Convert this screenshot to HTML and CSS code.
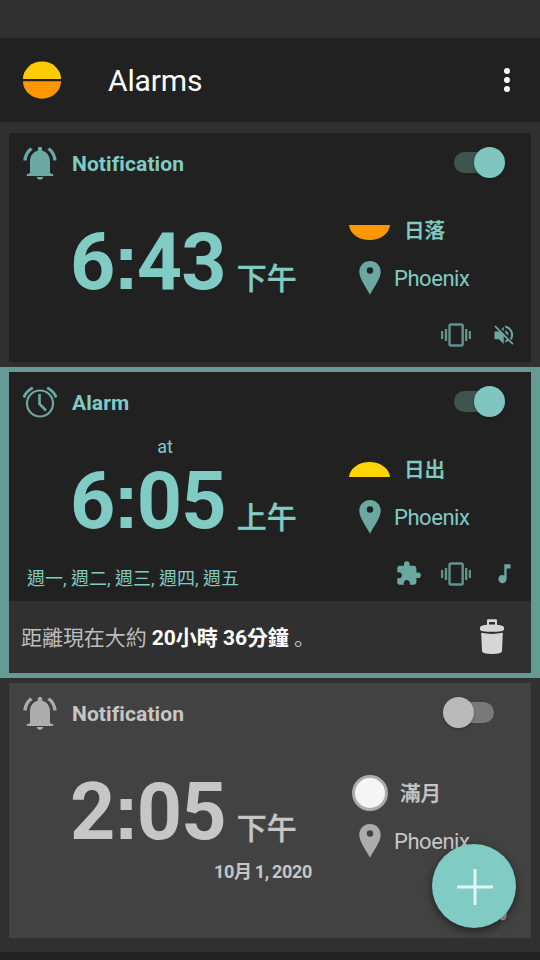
FILE: index.html
```html
<!DOCTYPE html>
<html lang="zh-Hant">
<head>
<meta charset="utf-8">
<title>Alarms</title>
<link rel="stylesheet" href="styles.css">
</head>
<body>
<svg class="defs" aria-hidden="true">
  <symbol id="bell" viewBox="0 0 24 24"><path d="M7.58 4.08L6.15 2.65C3.75 4.48 2.17 7.3 2.03 10.5h2c.15-2.65 1.51-4.97 3.55-6.42zM19.97 10.5h2c-.15-3.2-1.73-6.02-4.12-7.85l-1.42 1.43c2.02 1.45 3.39 3.77 3.54 6.42zM18 11c0-3.07-1.64-5.64-4.7-6.4V3.4C13.3 2.7 12.7 2.2 12 2.2s-1.3.5-1.3 1.2v1.2C7.6 5.36 6 7.92 6 11v7l-2 .9v.9h16v-.9l-2-.9zM10 20.4h4c-.2 1-1 1.7-2 1.7s-1.8-.7-2-1.7z"/></symbol>
  <symbol id="clock" viewBox="0 0 40 40"><g fill="none" stroke="currentColor"><circle cx="20" cy="21.500" r="13" stroke-width="2.200"/><path d="M19.500 12v10l6.500 6.500" stroke-width="2.600"/><path d="M3.800 15.500A18.500 18.500 0 0 1 12.800 5.800M36.200 15.500A18.500 18.500 0 0 0 27.200 5.800" stroke-width="2.800"/></g></symbol>
  <symbol id="pin" viewBox="0 0 22 34"><path fill-rule="evenodd" d="M11 0C5 0 .3 4.700.3 10.700c0 6.500 6.200 14.500 10.700 23.000 4.500-8.500 10.700-16.500 10.700-23C21.700 4.700 17 0 11 0zm0 6.300a3.200 3.200 0 1 1 0 6.400 3.200 3.200 0 0 1 0-6.400z"/></symbol>
  <symbol id="vibrate" viewBox="0 0 30 24"><rect x="8.500" y="1.500" width="13.200" height="21" rx="1.500" fill="none" stroke="currentColor" stroke-width="2.400"/><path d="M0 8h2.200v8H0zM3.800 6h2.400v12H3.800zM24 6h2.400v12H24zM27.800 8H30v8h-2.200z"/></symbol>
  <symbol id="muted" viewBox="0 0 20 20"><path d="M.5 6.500h4.600L.4 1.800 1.600.6l18 18-1.300 1.200-4-4A9 9 0 0 1 11.200 17.600v-2.200c.6-.2 1.200-.5 1.700-.9L9.700 11.200V19L5 14.200H.5zM9.700 1.700v4.600L7.400 4zM11.200.5a9.500 9.500 0 0 1 6.300 14.600L16 13.600A7.300 7.300 0 0 0 11.200 2.700zM11.200 5.300c2.600 1 3.600 3.500 2.900 5.300L11.200 7.800z"/></symbol>
  <symbol id="puzzle" viewBox="0 0 24 24"><path d="M20.500 11H19V7c0-1.100-.9-2-2-2h-4V3.500a2.500 2.500 0 0 0-5 0V5H4c-1.100 0-1.990.9-1.990 2v3.800H3.500c1.490 0 2.700 1.210 2.700 2.700s-1.210 2.700-2.700 2.700H2V20c0 1.100.9 2 2 2h3.800v-1.500c0-1.490 1.210-2.700 2.700-2.700s2.700 1.210 2.700 2.700V22H17c1.100 0 2-.9 2-2v-4h1.500a2.500 2.500 0 0 0 0-5z"/></symbol>
  <symbol id="note" viewBox="0 0 20 20"><path d="M10.300.3h6.200v4.200h-3.900v10.600a4.100 4.100 0 1 1-2.300-3.700z"/></symbol>
</svg>
<header class="topbar">
  <svg class="logo" viewBox="0 0 38 38"><path fill="#ffcb05" d="M0 18a19 17.500 0 0 1 38 0z"/><path fill="#ff9800" d="M0 20.200h38a19 17.500 0 0 1-38 0z"/></svg>
  <h1 class="title">Alarms</h1>
  <svg class="more" viewBox="0 0 6 24"><circle cx="3" cy="3" r="3"/><circle cx="3" cy="12" r="3"/><circle cx="3" cy="21" r="3"/></svg>
</header>
<main class="list">
  <section class="item">
    <article class="card">
      <div class="head"><svg class="kind"><use href="#bell"/></svg><span class="label">Notification</span><span class="switch"><i class="thumb"></i></span></div>
      <div class="body">
        <div class="when"><p class="at"></p><p class="time">6<span class="colon">:</span>43<span class="ampm">下午</span></p></div>
        <div class="where">
          <div class="row"><svg class="sun" viewBox="0 0 41 15"><path fill="#ff9800" d="M0 0h41C40 9 31 15 20.500 15S1 9 0 0z"/></svg><b class="event">日落</b></div>
          <div class="row"><svg class="pin"><use href="#pin"/></svg><span class="place">Phoenix</span></div>
        </div>
      </div>
      <div class="foot"><span class="days"></span><svg class="vib"><use href="#vibrate"/></svg><svg class="sound"><use href="#muted"/></svg></div>
    </article>
  </section>
  <section class="item selected">
    <article class="card">
      <div class="head"><svg class="kind"><use href="#clock"/></svg><span class="label">Alarm</span><span class="switch"><i class="thumb"></i></span></div>
      <div class="body">
        <div class="when"><p class="at">at</p><p class="time">6<span class="colon">:</span>05<span class="ampm">上午</span></p></div>
        <div class="where">
          <div class="row"><svg class="sun rise" viewBox="0 0 41 15"><path fill="#ffd500" d="M0 15h41C40 6 31 0 20.500 0S1 6 0 15z"/></svg><b class="event">日出</b></div>
          <div class="row"><svg class="pin"><use href="#pin"/></svg><span class="place">Phoenix</span></div>
        </div>
      </div>
      <div class="foot"><span class="days">週一, 週二, 週三, 週四, 週五</span><svg class="addon"><use href="#puzzle"/></svg><svg class="vib"><use href="#vibrate"/></svg><svg class="sound"><use href="#note"/></svg></div>
      <div class="remaining"><span class="left">距離現在大約 <b>20小時 36分鐘</b> <span class="stop" lang="zh-Hans">。</span></span>
        <svg class="trash" viewBox="0 0 24 35"><path d="M7 6V1.200Q7 .3 8 .3h8q1 0 1 .9V6h-2V3H9v3z"/><path d="M0 8.500C0 6.500 5 5.500 12 5.500s12 1 12 3v2c0 1.500-5 2.300-12 2.300S0 12 0 10.500zM1.200 13.800Q12 16 22.800 13.800L22 32q0 3-10 3T2 32z"/></svg></div>
    </article>
  </section>
  <section class="item">
    <article class="card off">
      <div class="head"><svg class="kind"><use href="#bell"/></svg><span class="label">Notification</span><span class="switch"><i class="thumb"></i></span></div>
      <div class="body">
        <div class="when"><p class="at"></p><p class="time">2<span class="colon">:</span>05<span class="ampm">下午</span></p></div>
        <div class="where">
          <div class="row"><i class="moon"></i><b class="event near">滿月</b></div>
          <div class="row"><svg class="pin"><use href="#pin"/></svg><span class="place">Phoenix</span></div>
        </div>
      </div>
      <div class="date">10月 1, 2020</div>
      <div class="foot"><span class="days"></span><svg class="sound"><use href="#note"/></svg></div>
    </article>
  </section>
</main>
<div class="bottom"></div>
<button class="fab" aria-label="Add"><svg viewBox="0 0 36 36"><path d="M18 0v36M0 18h36"/></svg></button>
</body>
</html>
```
FILE: styles.css
```css
* { box-sizing: border-box; }
body {
  margin: 0;
  width: 540px;
  height: 960px;
  overflow: hidden;
  position: relative;
  display: flex;
  flex-direction: column;
  background: #303030;
  font-family: Roboto, "Noto Sans CJK TC", sans-serif;
}
svg { display: block; flex: none; fill: currentColor; }
.defs { position: absolute; width: 0; height: 0; }
h1, p { margin: 0; }

.topbar {
  height: 84px;
  margin-top: 38px;
  padding: 0 30px 0 23px;
  display: flex;
  align-items: center;
  background: #212121;
  color: #fff;
  flex: none;
}
.logo { width: 38px; height: 38px; }
.title { margin-left: 47px; font-size: 30px; letter-spacing: -.15px; font-weight: 400; line-height: 36px; padding-top: 2px; flex: 1; }
.more { width: 6px; height: 24px; margin-bottom: 1px; }

.list { padding-top: 6px; flex: none; }
.item { padding: 5px 9px; }
.selected { background: #669a94; }

.card { background: #212121; color: #80cbc4; --icon: #6ba8a2; --track: #40544f; --thumb: #7fc6c0; }
.card.off { background: #424242; color: #c6c6c6; --icon: #acacac; --track: #797979; --thumb: #b9b9b9; }

.head { height: 60px; display: flex; align-items: center; padding: 0 26px 1px 11px; }
.kind { width: 40px; height: 40px; color: var(--icon); }
.label { margin-left: 12px; font-size: 21px; letter-spacing: .1px; font-weight: 700; flex: 1; padding-top: 3px; }
.switch {
  width: 41px;
  height: 21px;
  margin-right: 10px;
  border-radius: 11px;
  background: var(--track);
  display: flex;
  align-items: center;
  justify-content: flex-end;
}
.thumb {
  width: 31px;
  height: 31px;
  margin-right: -10px;
  border-radius: 50%;
  background: var(--thumb);
  box-shadow: 0 1px 3px rgba(0, 0, 0, .3);
  flex: none;
}
.off .switch { justify-content: flex-start; margin-right: 11px; }
.off .thumb { margin: 0 0 0 -10px; }

.body { height: 116px; display: grid; grid-template-columns: 312px 1fr; }
.at { height: 30px; line-height: 30px; text-align: center; font-size: 18px; }
.time { margin-top: -1px; padding-left: 61px; font-size: 79px; letter-spacing: -.9px; line-height: 76px; font-weight: 700; white-space: nowrap; }
.colon { font-family: "Liberation Sans", sans-serif; margin: 0 -1.5px; line-height: 1; }
.ampm { font-size: 30px; font-weight: 500; letter-spacing: 0; margin-left: 11px; -webkit-text-stroke: .3px currentColor; }
.where { padding: 14px 0 0 28px; }
.off .where { padding-top: 26px; }
.row { height: 48px; display: flex; align-items: center; }
.sun { width: 41px; height: 15px; margin-top: 2px; }
.sun.rise { margin-top: -1px; }
.event { margin-left: 14px; font-size: 20.6px; font-weight: 500; line-height: 30px; -webkit-text-stroke: .3px currentColor; }
.moon { width: 36px; height: 36px; margin-left: 3px; border: 3px solid #acacac; border-radius: 50%; background: #f5f5f5; }
.event.near { margin-left: 12px; padding-top: 2px; }
.pin { width: 22px; height: 34px; margin: 0 13px 2px 10px; color: var(--icon); }
.off .pin { margin-bottom: 0; }
.place { font-size: 22px; line-height: 26px; letter-spacing: -.45px; }
.off .place { padding-top: 2px; }

.date { height: 26px; line-height: 26px; width: 303px; text-align: right; font-size: 18px; font-weight: 700; letter-spacing: -.3px; word-spacing: -1.2px; }
.foot { height: 53px; display: flex; align-items: center; padding: 0 17px 2px 18px; color: var(--icon); }
.days { flex: 1; font-size: 18px; color: #80cbc4; padding-top: 6px; }
.addon { width: 27px; height: 27px; margin-right: 19px; }
.vib { width: 30px; height: 24px; opacity: .85; }
.sound { width: 20px; height: 20px; margin-left: 23px; }

.remaining {
  height: 72px;
  padding: 0 27px 1px 12px;
  display: flex;
  align-items: center;
  justify-content: space-between;
  background: #303030;
  color: #bdbdbd;
  font-size: 21px;
}
.left { padding-bottom: 2px; letter-spacing: -.05px; }
.remaining b { color: #fff; }
.stop { font-family: "Noto Sans CJK SC", sans-serif; line-height: 1; }
.trash { width: 24px; height: 35px; color: #d6d6d6; }

.bottom { height: 8px; background: #212121; margin-top: auto; flex: none; }

.fab {
  position: absolute;
  left: 432px;
  top: 844px;
  width: 84px;
  height: 84px;
  padding: 0;
  border: 0;
  border-radius: 50%;
  background: #80cbc4;
  box-shadow: 0 3px 8px rgba(0, 0, 0, .5);
  display: flex;
  align-items: center;
  justify-content: center;
}
.fab svg { width: 36px; height: 36px; margin: 1px 0 0 1px; stroke: #e3f5f3; stroke-width: 3; }
```
